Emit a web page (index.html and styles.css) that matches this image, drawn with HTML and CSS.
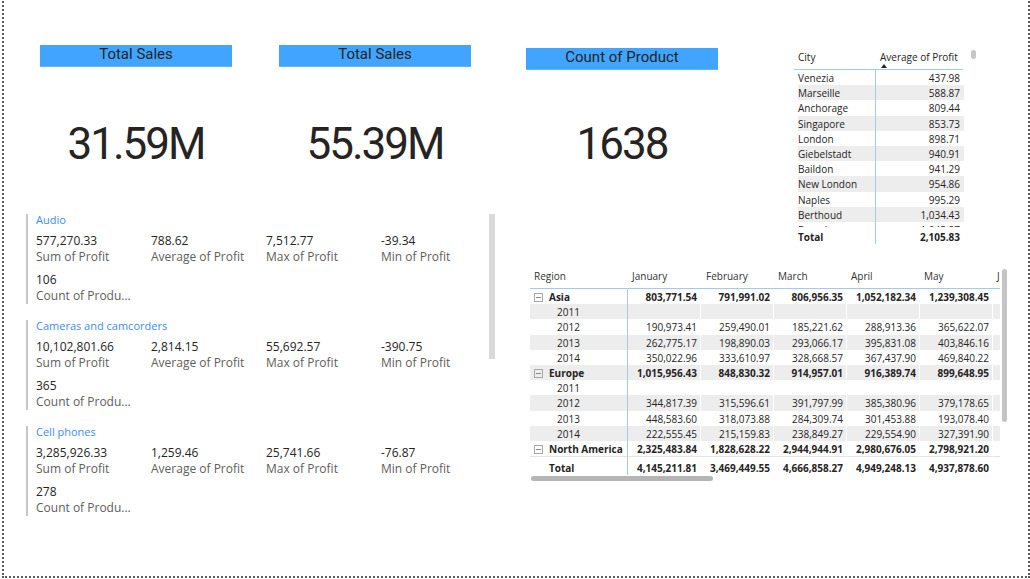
FILE: index.html
```html
<!DOCTYPE html>
<html lang="en">
<head>
<meta charset="utf-8">
<title>Sales report</title>
<link rel="stylesheet" href="styles.css">
</head>
<body>
<div class="canvas">
  <div class="col-left">
    <div class="kpi-row">
      <section class="kpi kpi-1">
        <div class="kpi-title">Total Sales</div>
        <div class="kpi-value">31.59M</div>
      </section>
      <section class="kpi kpi-2">
        <div class="kpi-title">Total Sales</div>
        <div class="kpi-value">55.39M</div>
      </section>
    </div>
    <section class="multirow">
      <div class="mr-scroll"></div>
      <div class="mr-group">
        <div class="mr-title">Audio</div>
        <div class="mr-fields">
          <div><div class="mr-value">577,270.33</div><div class="mr-label">Sum of Profit</div></div>
          <div><div class="mr-value">788.62</div><div class="mr-label">Average of Profit</div></div>
          <div><div class="mr-value">7,512.77</div><div class="mr-label">Max of Profit</div></div>
          <div><div class="mr-value">-39.34</div><div class="mr-label">Min of Profit</div></div>
          <div><div class="mr-value">106</div><div class="mr-label">Count of Produ...</div></div>
        </div>
      </div>
      <div class="mr-group">
        <div class="mr-title">Cameras and camcorders</div>
        <div class="mr-fields">
          <div><div class="mr-value">10,102,801.66</div><div class="mr-label">Sum of Profit</div></div>
          <div><div class="mr-value">2,814.15</div><div class="mr-label">Average of Profit</div></div>
          <div><div class="mr-value">55,692.57</div><div class="mr-label">Max of Profit</div></div>
          <div><div class="mr-value">-390.75</div><div class="mr-label">Min of Profit</div></div>
          <div><div class="mr-value">365</div><div class="mr-label">Count of Produ...</div></div>
        </div>
      </div>
      <div class="mr-group">
        <div class="mr-title">Cell phones</div>
        <div class="mr-fields">
          <div><div class="mr-value">3,285,926.33</div><div class="mr-label">Sum of Profit</div></div>
          <div><div class="mr-value">1,259.46</div><div class="mr-label">Average of Profit</div></div>
          <div><div class="mr-value">25,741.66</div><div class="mr-label">Max of Profit</div></div>
          <div><div class="mr-value">-76.87</div><div class="mr-label">Min of Profit</div></div>
          <div><div class="mr-value">278</div><div class="mr-label">Count of Produ...</div></div>
        </div>
      </div>
    </section>
  </div>

  <div class="col-right">
    <div class="right-top">
      <section class="kpi kpi-3">
        <div class="kpi-title">Count of Product</div>
        <div class="kpi-value">1638</div>
      </section>
      <section class="city">
        <div class="city-scroll"></div>
        <div class="city-head">
          <div class="city-h1">City</div>
          <div class="city-h2">Average of Profit
            <svg class="sort-arrow" width="6" height="4" viewBox="0 0 6 4"><path d="M0 4 L3 0 L6 4 Z" fill="#252423"/></svg>
          </div>
        </div>
        <div class="city-body">
          <div class="city-row"><span class="c1">Venezia</span><span class="c2">437.98</span></div>
          <div class="city-row alt"><span class="c1">Marseille</span><span class="c2">588.87</span></div>
          <div class="city-row"><span class="c1">Anchorage</span><span class="c2">809.44</span></div>
          <div class="city-row alt"><span class="c1">Singapore</span><span class="c2">853.73</span></div>
          <div class="city-row"><span class="c1">London</span><span class="c2">898.71</span></div>
          <div class="city-row alt"><span class="c1">Giebelstadt</span><span class="c2">940.91</span></div>
          <div class="city-row"><span class="c1">Baildon</span><span class="c2">941.29</span></div>
          <div class="city-row alt"><span class="c1">New London</span><span class="c2">954.86</span></div>
          <div class="city-row"><span class="c1">Naples</span><span class="c2">995.29</span></div>
          <div class="city-row alt"><span class="c1">Berthoud</span><span class="c2">1,034.43</span></div>
          <div class="city-row"><span class="c1">Beverly</span><span class="c2">1,045.87</span></div>
        </div>
        <div class="city-row city-total"><span class="c1">Total</span><span class="c2">2,105.83</span></div>
      </section>
    </div>

    <section class="matrix">
      <div class="matrix-clip">
        <table class="mx">
          <colgroup>
            <col class="mx-col-first"><col class="mx-col"><col class="mx-col"><col class="mx-col"><col class="mx-col"><col class="mx-col"><col class="mx-col">
          </colgroup>
          <thead>
            <tr><th>Region</th><th>January</th><th class="feb">February</th><th>March</th><th>April</th><th>May</th><th>June</th></tr>
          </thead>
          <tbody>
            <tr class="grp"><td class="rh"><svg class="exp" width="9" height="9" viewBox="0 0 9 9"><rect x="0.5" y="0.5" width="8" height="8" fill="none" stroke="#a8a8a8"/><path d="M2 4.5 H7" stroke="#8a8a8a"/></svg>Asia</td><td>803,771.54</td><td>791,991.02</td><td>806,956.35</td><td>1,052,182.34</td><td>1,239,308.45</td><td>1,104,573.21</td></tr>
            <tr class="alt"><td class="ry">2011</td><td></td><td></td><td></td><td></td><td></td><td></td></tr>
            <tr><td class="ry">2012</td><td>190,973.41</td><td>259,490.01</td><td>185,221.62</td><td>288,913.36</td><td>365,622.07</td><td>312,455.18</td></tr>
            <tr class="alt"><td class="ry">2013</td><td>262,775.17</td><td>198,890.03</td><td>293,066.17</td><td>395,831.08</td><td>403,846.16</td><td>398,112.40</td></tr>
            <tr><td class="ry">2014</td><td>350,022.96</td><td>333,610.97</td><td>328,668.57</td><td>367,437.90</td><td>469,840.22</td><td>394,005.63</td></tr>
            <tr class="grp alt"><td class="rh"><svg class="exp" width="9" height="9" viewBox="0 0 9 9"><rect x="0.5" y="0.5" width="8" height="8" fill="none" stroke="#a8a8a8"/><path d="M2 4.5 H7" stroke="#8a8a8a"/></svg>Europe</td><td>1,015,956.43</td><td>848,830.32</td><td>914,957.01</td><td>916,389.74</td><td>899,648.95</td><td>987,654.32</td></tr>
            <tr><td class="ry">2011</td><td></td><td></td><td></td><td></td><td></td><td></td></tr>
            <tr class="alt"><td class="ry">2012</td><td>344,817.39</td><td>315,596.61</td><td>391,797.99</td><td>385,380.96</td><td>379,178.65</td><td>301,224.75</td></tr>
            <tr><td class="ry">2013</td><td>448,583.60</td><td>318,073.88</td><td>284,309.74</td><td>301,453.88</td><td>193,078.40</td><td>352,870.19</td></tr>
            <tr class="alt"><td class="ry">2014</td><td>222,555.45</td><td>215,159.83</td><td>238,849.27</td><td>229,554.90</td><td>327,391.90</td><td>333,559.38</td></tr>
            <tr class="grp"><td class="rh"><svg class="exp" width="9" height="9" viewBox="0 0 9 9"><rect x="0.5" y="0.5" width="8" height="8" fill="none" stroke="#a8a8a8"/><path d="M2 4.5 H7" stroke="#8a8a8a"/></svg>North America</td><td>2,325,483.84</td><td>1,828,628.22</td><td>2,944,944.91</td><td>2,980,676.05</td><td>2,798,921.20</td><td>2,610,337.46</td></tr>
          </tbody>
          <tfoot>
            <tr class="total"><td class="rt">Total</td><td>4,145,211.81</td><td>3,469,449.55</td><td>4,666,858.27</td><td>4,949,248.13</td><td>4,937,878.60</td><td>4,702,564.99</td></tr>
          </tfoot>
        </table>
      </div>
      <div class="mx-vscroll"></div>
      <div class="mx-hscroll"></div>
    </section>
  </div>
</div>
</body>
</html>
```

FILE: styles.css
```css
html, body {
  margin: 0;
  padding: 0;
  background: #ffffff;
  overflow: hidden;
}

body {
  font-family: "Open Sans", "Noto Sans", sans-serif;
  color: #252423;
}

.canvas {
  box-sizing: border-box;
  width: 1028px;
  height: 580px;
  margin: -2px 0 0 2px;
  border: 2px dotted #5c5c5c;
  display: flex;
  align-items: flex-start;
}

/* ---------- left column ---------- */
.col-left {
  margin-left: 22px;
  width: 469px;
  padding-top: 45px;
  display: flex;
  flex-direction: column;
}

.kpi-row {
  display: flex;
  align-items: flex-start;
  height: 167px;
}

.kpi {
  width: 192px;
}

.kpi-1 { margin-left: 14px; }
.kpi-2 { margin-left: 47px; }

.kpi-title {
  height: 22px;
  background: #41a5ff;
  border-bottom: 1px solid #62b4ff;
  box-sizing: border-box;
  font-family: Roboto, "Open Sans", sans-serif;
  font-size: 15px;
  line-height: 19px;
  text-align: center;
  color: #252423;
  white-space: nowrap;
}

.kpi-value {
  margin-top: 55px;
  font-family: Roboto, "Open Sans", sans-serif;
  font-size: 44px;
  line-height: 44px;
  letter-spacing: -2px;
  text-align: center;
  color: #252423;
}

.kpi-3 .kpi-value { margin-top: 52px; }

/* ---------- multi-row card ---------- */
.multirow {
  position: relative;
  padding-top: 2px;
  display: flex;
  flex-direction: column;
  gap: 16px;
}

.mr-scroll {
  position: absolute;
  right: 0;
  top: 2px;
  width: 6px;
  height: 145px;
  background: #d9d9d9;
}

.mr-group {
  box-sizing: border-box;
  height: 90px;
  border-left: 2px solid #c8c6c4;
  padding-left: 8px;
}

.mr-title {
  font-size: 11px;
  line-height: 12px;
  color: #3b8cff;
  white-space: nowrap;
}

.mr-fields {
  display: grid;
  grid-template-columns: repeat(4, 115px);
  row-gap: 7px;
  margin-top: 7px;
}

.mr-value,
.mr-label {
  font-size: 12px;
  line-height: 16px;
  white-space: nowrap;
}

.mr-value { color: #252423; }
.mr-label { color: #605e5c; }

/* ---------- right column ---------- */
.col-right {
  margin-left: 31px;
  width: 498px;
}

.right-top {
  box-sizing: border-box;
  height: 266px;
  padding-top: 48px;
  display: flex;
  align-items: flex-start;
}

/* city table */
.city {
  position: relative;
  margin-left: 76px;
  width: 181px;
  font-size: 10px;
  color: #252423;
}

.city-scroll {
  position: absolute;
  left: 177px;
  top: 2px;
  width: 5px;
  height: 9px;
  border-radius: 3px;
  background: #c6c6c6;
}

.city-head {
  display: flex;
  width: 169px;
  height: 22px;
  box-sizing: border-box;
  border-bottom: 1px solid #9fcbf3;
}

.city-h1 {
  width: 81px;
  padding: 2px 0 0 4px;
  line-height: 14px;
  box-sizing: border-box;
}

.city-h2 {
  position: relative;
  flex: 1;
  padding: 2px 0 0 5px;
  line-height: 14px;
  white-space: nowrap;
}

.sort-arrow {
  position: absolute;
  left: 6px;
  top: 16px;
}

.city-body {
  height: 157px;
  overflow: hidden;
}

.city-row {
  display: flex;
  margin-left: 4px;
  width: 166px;
  height: 15.2px;
  line-height: 13px;
  white-space: nowrap;
}

.city-row .c1,
.city-row .c2 {
  padding-top: 2px;
}

.city-row.alt { background: #ededed; }

.city-row .c1 {
  width: 77px;
  border-right: 1px solid #9fcbf3;
}

.city-row .c2 {
  flex: 1;
  text-align: right;
  padding-right: 4px;
}

.city-total {
  height: 17px;
  line-height: 15px;
  font-weight: 700;
}

.city-total .c1,
.city-total .c2 {
  padding-top: 3px;
}

/* matrix */
.matrix {
  position: relative;
  margin-left: 4px;
  width: 477px;
  height: 216px;
}

.matrix-clip {
  width: 470px;
  overflow: hidden;
}

.mx {
  table-layout: fixed;
  border-collapse: separate;
  border-spacing: 0;
  width: 536px;
  font-size: 10px;
  color: #252423;
  white-space: nowrap;
}

.mx-col-first { width: 98px; }
.mx-col { width: 73px; }

.mx th {
  height: 23px;
  box-sizing: border-box;
  padding: 0 0 3px 4px;
  border-bottom: 1px solid #9fcbf3;
  text-align: left;
  font-weight: 400;
  color: #333333;
  overflow: hidden;
}

.mx th.feb { padding-left: 5px; }

.mx td {
  height: 14.2px;
  padding: 1px 3px 0 0;
  line-height: 14px;
  text-align: right;
  border-right: 1px solid #ffffff;
  overflow: hidden;
}

.mx tr.alt td { background: #ededed; }

.mx tr.grp td,
.mx tr.total td {
  font-weight: 700;
}

.mx td.rh,
.mx td.ry,
.mx td.rt {
  text-align: left;
  border-right: 1px solid #9fcbf3;
}

.mx td.rh { padding-left: 4px; }
.mx td.ry { padding-left: 27px; }
.mx td.rt { padding-left: 19px; }

.exp {
  vertical-align: -1px;
  margin-right: 6px;
}

.mx tr.total td {
  height: 18px;
  box-sizing: border-box;
  padding-top: 4px;
  border-top: 1px solid #e3e3e3;
}

.mx-vscroll {
  position: absolute;
  left: 472px;
  top: 3px;
  width: 5px;
  height: 153px;
  border-radius: 3px;
  background: #c4c4c4;
}

.mx-hscroll {
  position: absolute;
  left: 1px;
  top: 210px;
  width: 182px;
  height: 5px;
  border-radius: 3px;
  background: #b5b5b5;
}
```
